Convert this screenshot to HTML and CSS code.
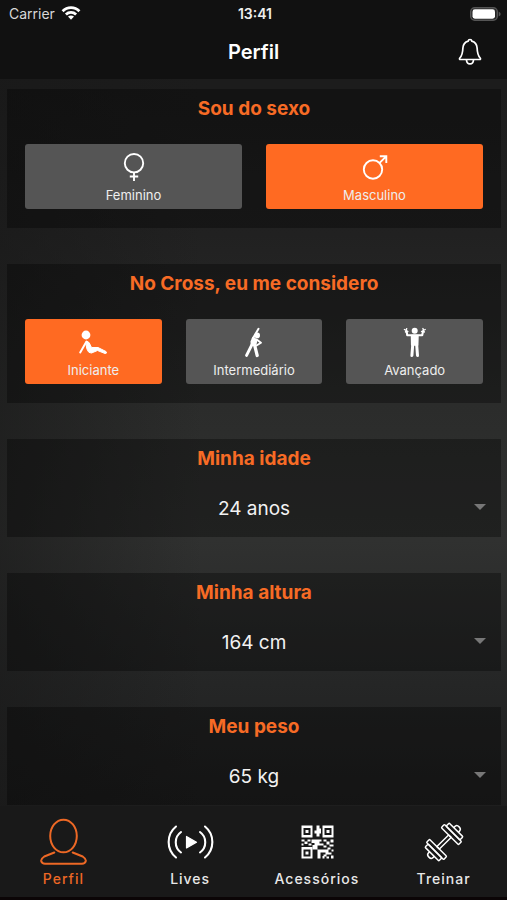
FILE: index.html
```html
<!DOCTYPE html>
<html lang="pt-BR">
<head>
<meta charset="utf-8">
<meta name="viewport" content="width=device-width, initial-scale=1">
<title>Perfil</title>
<link rel="stylesheet" href="styles.css">
</head>
<body>
<div class="app">
  <header class="top">
    <div class="status">
      <div class="carrier">
        <span>Carrier</span>
        <svg width="20" height="16" viewBox="0 0 20 16" fill="none" stroke="#fff" stroke-width="2.8">
          <path d="M1.6 5.300C6.300 0.400 13.700 0.400 18.400 5.300"/>
          <path d="M4.900 8.500C7.800 5.700 12.200 5.700 15.100 8.500"/>
          <path d="M7 10.600Q10 8.200 13 10.600L10 13.800Z" fill="#fff" stroke="none"/>
        </svg>
      </div>
      <time class="clock">13:41</time>
      <svg class="battery" width="31" height="14" viewBox="0 0 31 14">
        <rect x="0.7" y="0.7" width="26.6" height="12.6" rx="4" fill="#252525" stroke="#555" stroke-width="1.4"/>
        <rect x="2.500" y="2.300" width="22.500" height="9.400" rx="2.400" fill="#fff"/>
        <path d="M28.700 4.500Q30.700 5.500 30.700 7T28.700 9.500Z" fill="#555"/>
      </svg>
    </div>
    <div class="titlebar">
      <h1>Perfil</h1>
      <button class="bell" type="button" aria-label="Notificações">
        <svg width="24" height="28" viewBox="0 0 24 28" fill="none" stroke="#fff" stroke-width="1.700" stroke-linecap="round" stroke-linejoin="round">
          <path d="M12 1.500C11 1.500 10.300 2.100 10.200 3.100C6.900 4 5.100 6.500 4.900 10C4.700 15.500 4.200 17.500 1.800 20C1.200 20.800 1.500 21.500 2.500 21.500H21.500C22.500 21.500 22.800 20.800 22.200 20C19.800 17.500 19.300 15.500 19.100 10C18.900 6.500 17.100 4 13.800 3.100C13.700 2.100 13 1.500 12 1.500Z"/>
          <path d="M8.500 22C8.800 27.200 15.200 27.200 15.500 22"/>
        </svg>
      </button>
    </div>
  </header>

  <main class="content">
    <section class="card">
      <h2>Sou do sexo</h2>
      <div class="options">
        <button class="option" type="button" aria-pressed="false">
          <svg width="30" height="32" viewBox="0 0 30 32" fill="none" stroke="#fff" stroke-width="1.900">
            <circle cx="15" cy="11.200" r="9.200"/><path d="M15 20.400V29M10.800 24.500H19.200"/>
          </svg>
          <span>Feminino</span>
        </button>
        <button class="option selected" type="button" aria-pressed="true">
          <svg width="30" height="32" viewBox="0 0 30 32" fill="none" stroke="#fff" stroke-width="1.900">
            <circle cx="13" cy="17.500" r="9.200"/><path d="M19.600 10.900L26.200 4.300M19.800 4.200H26.300V11"/>
          </svg>
          <span>Masculino</span>
        </button>
      </div>
    </section>

    <section class="card">
      <h2>No Cross, eu me considero</h2>
      <div class="options">
        <button class="option selected" type="button" aria-pressed="true">
          <svg width="30" height="32" viewBox="0 0 30 32" fill="#fff" stroke="#fff" stroke-linecap="round" stroke-linejoin="round">
            <circle cx="8" cy="8" r="4.400" stroke="none"/>
            <path d="M8.500 14.500L2.200 25.500" fill="none" stroke-width="2"/>
            <path d="M8.200 14.700Q10 13.500 11.300 16L13.500 20.500L20 20.500L28 24.500Q29.500 26.500 27 26.500L19.500 23.500L13.500 26Q10.500 26 9.500 23.500Q8.500 21.500 8.200 18Z" stroke-width="1"/>
          </svg>
          <span>Iniciante</span>
        </button>
        <button class="option" type="button" aria-pressed="false">
          <svg width="30" height="32" viewBox="0 0 30 32" fill="none" stroke="#fff" stroke-linecap="round" stroke-linejoin="round">
            <circle cx="18.200" cy="8.400" r="2.800" fill="#fff" stroke="none"/>
            <path d="M13.800 11.500L19.500 1.800" stroke-width="2"/>
            <path d="M17.600 12.500L22 15.800L17.500 18.500" stroke-width="1.900"/>
            <path d="M14 10.500L17.700 12.800L16.500 18.500L12.500 18L12.200 14.500Z" fill="#fff" stroke-width="1.500"/>
            <path d="M13 17.500L7.500 28.500" stroke-width="2.800"/>
            <path d="M15.700 18.500L18.200 28.500" stroke-width="3.200"/>
          </svg>
          <span>Intermediário</span>
        </button>
        <button class="option" type="button" aria-pressed="false">
          <svg width="30" height="32" viewBox="0 0 30 32" fill="none" stroke="#fff" stroke-linecap="round" stroke-linejoin="round">
            <circle cx="14.700" cy="3.700" r="3" fill="#fff" stroke="none"/>
            <path d="M4.400 2.500L7.900 4.500M5.500 5L6.700 1.600M21.500 4.500L25.200 2.500M22.900 1.600L24.300 5" stroke-width="1.400"/>
            <path d="M6.700 4.500L7.200 8.200H22.200L23 4.500" stroke-width="2.100"/>
            <path d="M11.500 8.500H18L17.700 18H11.700Z" fill="#fff" stroke-width="1.500"/>
            <path d="M12.700 18L11.900 28.500M16.700 18L17.500 28.500" stroke-width="3"/>
          </svg>
          <span>Avançado</span>
        </button>
      </div>
    </section>

    <section class="card">
      <h2><label for="age">Minha idade</label></h2>
      <div class="picker"><select id="age"><option>23 anos</option><option selected>24 anos</option><option>25 anos</option></select></div>
    </section>
    <section class="card">
      <h2><label for="height">Minha altura</label></h2>
      <div class="picker"><select id="height"><option>163 cm</option><option selected>164 cm</option><option>165 cm</option></select></div>
    </section>
    <section class="card">
      <h2><label for="weight">Meu peso</label></h2>
      <div class="picker"><select id="weight"><option>64 kg</option><option selected>65 kg</option><option>66 kg</option></select></div>
    </section>
  </main>

  <nav class="tabs">
    <a class="tab active" href="#perfil" aria-current="page">
      <svg width="48" height="48" viewBox="0 0 48 48" fill="none" stroke="currentColor" stroke-width="2" stroke-linecap="round" stroke-linejoin="round">
        <ellipse cx="24.500" cy="18" rx="13.300" ry="16.300"/>
        <path d="M15.300 34.500L5.300 38.500C3 40 2 41.500 2.200 43C2.700 45 4 45.700 6 45.700H43C45 45.700 46.300 45 46.800 43C47 41.500 46 40 43.700 38.500L33.700 34.500"/>
      </svg>
      <span>Perfil</span>
    </a>
    <a class="tab" href="#lives">
      <svg width="48" height="48" viewBox="0 0 48 48" fill="none" stroke="#fff" stroke-width="2.100" stroke-linecap="round">
        <path d="M10 8.500C0.200 16.500 0.200 31.500 10 39.500M15 14C8 19 8 29.500 15 34.500M39 8.500C48.800 16.500 48.800 31.500 39 39.500M34 14C41 19 41 29.500 34 34.500"/>
        <path d="M20.500 18.500V30L30.500 24.200Z" fill="#fff" stroke-width="1.200" stroke-linejoin="round"/>
      </svg>
      <span>Lives</span>
    </a>
    <a class="tab" href="#acessorios">
      <svg width="48" height="48" viewBox="-7.500 -7.500 48 48" fill="#fff">
        <path fill-rule="evenodd" d="M1 0H12V12H1ZM3 2.500V9.500H10V2.500ZM5 4.500H8V7.500H5ZM22 0H33V12H22ZM24 2.500V9.500H31V2.500ZM26 4.500H29V7.500H26ZM1 21.500H12V33H1ZM3 24V31H10V24ZM5 26H8V29H5Z"/>
        <path d="M16 0H19V3H20.500V8H19V11H16V8H14V5H16ZM1 14H4V16H1ZM4 16H7V18.500H4ZM7 14H10V16H7ZM11 14H21V16H19V18H23V20H17V24H12V19.500H14V17.500H11ZM8 18H11V20H8ZM1 18H3V20H1ZM23 14H26V16H23ZM26 16H29V19H26ZM30 14H33V17H30ZM29 19H33V21H29ZM23 20H26V22H23ZM17 24H27V22H30V24H28V27H31V29H26V31H23V29H25V27H20V33H17ZM22 30.500H24V33H22ZM26 31H28.500V33H26ZM30.500 30H33V33H30.500ZM31 24H33V26H31Z"/>
      </svg>
      <span>Acessórios</span>
    </a>
    <a class="tab" href="#treinar">
      <svg width="48" height="48" viewBox="0 0 48 48" fill="none" stroke="#fff" stroke-width="1.600" stroke-linejoin="round">
        <g transform="translate(24 24) rotate(-45) scale(0.92)">
          <path d="M-9 -1.900H9V1.900H-9Z"/>
          <rect x="-13.800" y="-13.200" width="4.800" height="26.400" rx="1"/>
          <rect x="-18.600" y="-10.600" width="4.800" height="21.200" rx="1"/>
          <path d="M-18.600 -3.500H-21C-24 -3 -24 3 -21 3.500H-18.600"/>
          <rect x="9" y="-13.200" width="4.800" height="26.400" rx="1"/>
          <rect x="13.800" y="-10.600" width="4.800" height="21.200" rx="1"/>
          <path d="M18.600 -3.500H21C24 -3 24 3 21 3.500H18.600"/>
        </g>
      </svg>
      <span>Treinar</span>
    </a>
  </nav>
</div>
</body>
</html>
```
FILE: styles.css
```css
* { box-sizing: border-box; }

body {
  margin: 0;
  background: #1c1c1c;
  color: #fff;
  font-family: Inter, "Liberation Sans", sans-serif;
}

h1, h2 { margin: 0; }

button, select { font: inherit; color: inherit; border: 0; }

.app {
  display: flex;
  flex-direction: column;
  height: 100vh;
  background:
    linear-gradient(90deg, rgba(24, 24, 24, 0.6), rgba(24, 24, 24, 0) 40%),
    linear-gradient(#1c1c1c 10%, #212121 26%, #2b2c2b 45%, #303130 60%, #252626 76%, #1e1e1e 90%);
}

.top {
  flex: none;
  padding-bottom: 2px;
  background: #111;
}

.status {
  display: grid;
  grid-template-columns: 1fr auto 1fr;
  align-items: center;
  height: 27px;
  padding: 0 6px 0 9px;
  font-size: 14px;
}

.carrier { display: flex; align-items: center; gap: 6px; color: #d8d8d8; }
.clock { font-weight: 600; color: #eee; }
.battery { justify-self: end; }

.titlebar {
  display: grid;
  grid-template-columns: 1fr auto 1fr;
  align-items: center;
  height: 50px;
  padding: 0 25px;
}

.titlebar h1 {
  grid-column: 2;
  font-size: 20px;
  font-weight: 600;
  line-height: 24px;
}

.bell {
  display: flex;
  justify-self: end;
  padding: 0;
  background: none;
}

.content {
  display: flex;
  flex: 1;
  flex-direction: column;
  gap: 36px;
  min-height: 0;
  padding: 10px 6px 0 7px;
  overflow: hidden;
}

.card {
  flex: none;
  padding: 8px 18px 19px;
  background: rgba(0, 0, 0, 0.32);
}

.card h2 {
  color: #f76b25;
  font-size: 19px;
  font-weight: 700;
  line-height: 24px;
  text-align: center;
}

.options { display: flex; gap: 24px; margin-top: 23px; }

.option {
  display: flex;
  flex: 1 1 0;
  flex-direction: column;
  align-items: center;
  gap: 2px;
  height: 65px;
  padding: 8px 0 0;
  border-radius: 3px;
  background: #555;
  color: #eee;
  font-size: 13px;
  line-height: 18px;
}

.option.selected { background: #ff6a22; }

.picker { position: relative; margin-top: 19px; }

.picker select {
  display: block;
  width: 100%;
  height: 36px;
  margin-bottom: -8px;
  padding: 0;
  appearance: none;
  background: transparent;
  color: #f2f2f2;
  font-size: 19px;
  text-align: center;
  text-align-last: center;
}

.picker option { background: #222; }

.picker::after {
  content: "";
  position: absolute;
  top: 14px;
  right: -3px;
  border: 6px solid transparent;
  border-top-color: #777;
  border-bottom: 0;
  pointer-events: none;
}

.tabs {
  display: grid;
  flex: none;
  grid-template-columns: repeat(4, 1fr);
  height: 94px;
  padding-top: 12px;
  border-bottom: 3px solid #0b0506;
  background: #191919;
}

.tab {
  display: flex;
  flex-direction: column;
  align-items: center;
  gap: 4px;
  color: #e8e8e8;
  font-size: 14px;
  font-weight: 500;
  letter-spacing: 1px;
  line-height: 18px;
  text-decoration: none;
}

.tab.active { color: #ed6825; }
```
